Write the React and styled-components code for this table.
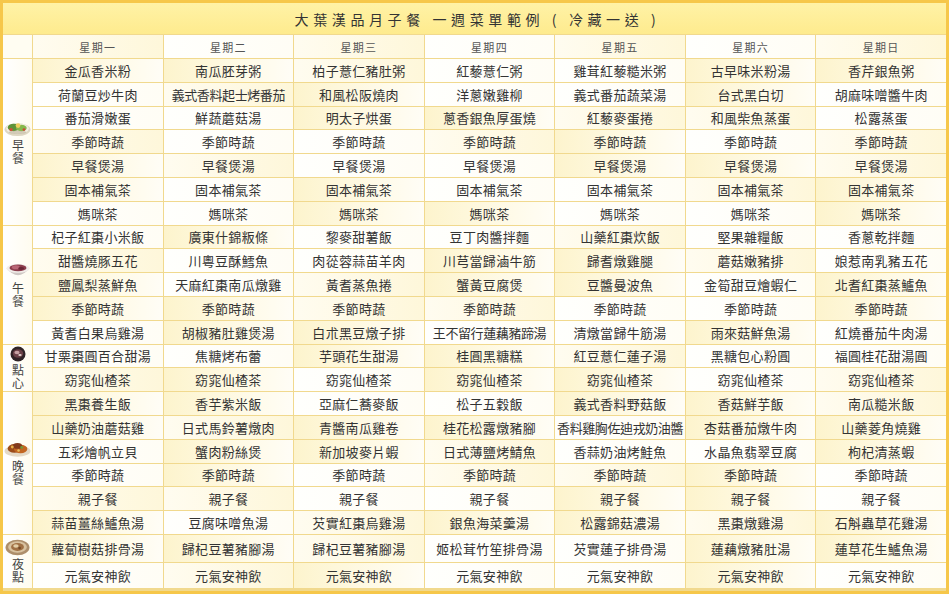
import React from "react";
import styled, { createGlobalStyle } from "styled-components";

const GlobalStyle = createGlobalStyle`
  html, body {
    margin: 0;
    padding: 0;
    background: #ffffff;
  }
  body {
    font-family: "Noto Sans CJK TC", "Noto Sans", sans-serif;
    color: #333;
  }
`;

const DAYS = ["星期一", "星期二", "星期三", "星期四", "星期五", "星期六", "星期日"];

const same = (t) => Array(7).fill(t);

const MEALS = [
  {
    key: "breakfast",
    label: "早餐",
    rows: [
      ["金瓜香米粉", "南瓜胚芽粥", "柏子薏仁豬肚粥", "紅藜薏仁粥", "雞茸紅藜糙米粥", "古早味米粉湯", "香芹銀魚粥"],
      ["荷蘭豆炒牛肉", "義式香料起士烤番茄", "和風松阪燒肉", "洋蔥嫩雞柳", "義式番茄蔬菜湯", "台式黑白切", "胡麻味噌醬牛肉"],
      ["番茄滑嫩蛋", "鮮蔬蘑菇湯", "明太子烘蛋", "蔥香銀魚厚蛋燒", "紅藜麥蛋捲", "和風柴魚蒸蛋", "松露蒸蛋"],
      same("季節時蔬"),
      same("早餐煲湯"),
      same("固本補氣茶"),
      same("媽咪茶"),
    ],
  },
  {
    key: "lunch",
    label: "午餐",
    rows: [
      ["杞子紅棗小米飯", "廣東什錦粄條", "黎麥甜薯飯", "豆丁肉醬拌麵", "山藥紅棗炊飯", "堅果雜糧飯", "香蔥乾拌麵"],
      ["甜醬燒豚五花", "川粵豆酥鱈魚", "肉蓯蓉蒜苗羊肉", "川芎當歸滷牛筋", "歸耆燉雞腿", "蘑菇嫩豬排", "娘惹南乳豬五花"],
      ["鹽鳳梨蒸鮮魚", "天麻紅棗南瓜燉雞", "黃耆蒸魚捲", "蟹黃豆腐煲", "豆醬曼波魚", "金筍甜豆燴蝦仁", "北耆紅棗蒸鱸魚"],
      same("季節時蔬"),
      ["黃耆白果烏雞湯", "胡椒豬肚雞煲湯", "白朮黑豆燉子排", "王不留行蓮藕豬蹄湯", "清燉當歸牛筋湯", "雨來菇鮮魚湯", "紅燒番茄牛肉湯"],
    ],
  },
  {
    key: "snack",
    label: "點心",
    rows: [
      ["甘栗棗圓百合甜湯", "焦糖烤布蕾", "芋頭花生甜湯", "桂圓黑糖糕", "紅豆薏仁蓮子湯", "黑糖包心粉圓", "福圓桂花甜湯圓"],
      same("窈窕仙楂茶"),
    ],
  },
  {
    key: "dinner",
    label: "晚餐",
    rows: [
      ["黑棗養生飯", "香芋紫米飯", "亞麻仁蕎麥飯", "松子五穀飯", "義式香料野菇飯", "香菇鮮芋飯", "南瓜糙米飯"],
      ["山藥奶油蘑菇雞", "日式馬鈴薯燉肉", "青醬南瓜雞卷", "桂花松露燉豬腳", "香料雞胸佐迪戎奶油醬", "杏菇番茄燉牛肉", "山藥菱角燒雞"],
      ["五彩燴帆立貝", "蟹肉粉絲煲", "新加坡麥片蝦", "日式薄鹽烤鯖魚", "香蒜奶油烤鮭魚", "水晶魚翡翠豆腐", "枸杞清蒸蝦"],
      same("季節時蔬"),
      same("親子餐"),
      ["蒜苗薑絲鱸魚湯", "豆腐味噌魚湯", "芡實紅棗烏雞湯", "銀魚海菜羹湯", "松露錦菇濃湯", "黑棗燉雞湯", "石斛蟲草花雞湯"],
    ],
  },
  {
    key: "night",
    label: "夜點",
    rows: [
      ["蘿蔔樹菇排骨湯", "歸杞豆薯豬腳湯", "歸杞豆薯豬腳湯", "姬松茸竹笙排骨湯", "芡實蓮子排骨湯", "蓮藕燉豬肚湯", "蓮草花生鱸魚湯"],
      same("元氣安神飲"),
    ],
  },
];

const TONES = {
  white: "linear-gradient(90deg, #fffffd 0%, #fffdf5 100%)",
  warm: "linear-gradient(90deg, #fdf4cd 0%, #fffbea 70%, #fffdf6 100%)",
  soft: "linear-gradient(90deg, #fffcf0 0%, #fef7da 100%)",
};

const toneFor = (r, c) => {
  const n = (r * 7 + c * 3 + ((r * c) % 4)) % 5;
  if (n === 0 || n === 3) return "warm";
  if (n === 1) return "soft";
  return "white";
};

const Sheet = styled.div`
  width: 949px;
  height: 594px;
  box-sizing: border-box;
  border: 3px solid #f6c74a;
  background: #f1d98e;
  display: grid;
  grid-template-columns: 29px repeat(7, 1fr);
  grid-template-rows: 31px 23px repeat(20, 22.8px) 27px 25px;
  gap: 1px;
  overflow: hidden;
`;

const Title = styled.div`
  grid-column: 1 / -1;
  display: flex;
  align-items: center;
  justify-content: center;
  background: linear-gradient(180deg, #fff2a6 0%, #feeb8e 100%);
  font-size: 14px;
  letter-spacing: 4.6px;
  color: #333;
  white-space: pre;
  padding-left: 6px;
`;

const Corner = styled.div`
  background: #fffdf2;
`;

const DayHead = styled.div`
  display: flex;
  align-items: center;
  justify-content: center;
  background: ${({ $tone }) => TONES[$tone]};
  font-size: 11px;
  letter-spacing: 1.3px;
  color: #555;
`;

const MealLabel = styled.div`
  grid-row: span ${({ $rows }) => $rows};
  display: flex;
  flex-direction: column;
  align-items: center;
  justify-content: center;
  background: linear-gradient(90deg, #ffffff 0%, #fffcef 100%);
`;

const LabelText = styled.span`
  writing-mode: vertical-rl;
  text-orientation: upright;
  font-size: 12px;
  line-height: 14px;
  letter-spacing: 1px;
  color: #444;
`;

const IconWrap = styled.div`
  display: flex;
  flex-shrink: 0;
  margin-bottom: 2px;
`;

const Cell = styled.div`
  display: flex;
  align-items: center;
  justify-content: center;
  background: ${({ $tone }) => TONES[$tone]};
  font-size: 13px;
  letter-spacing: ${({ $long }) => ($long ? "-0.4px" : "0.3px")};
  color: #333;
  white-space: nowrap;
  overflow: hidden;
`;

function MealIcon({ kind }) {
  if (kind === "breakfast") {
    return (
      <svg width="27" height="18" viewBox="0 0 25 16">
        <ellipse cx="12.5" cy="9.5" rx="12" ry="6" fill="#ddd6c2" />
        <ellipse cx="12.5" cy="8.5" rx="10.5" ry="5" fill="#f3efe3" />
        <ellipse cx="9" cy="7.5" rx="5.5" ry="3.4" fill="#5f9338" />
        <ellipse cx="16" cy="8" rx="5" ry="3" fill="#86b84c" />
        <circle cx="13" cy="5.8" r="2.2" fill="#efcf5e" />
        <circle cx="6.5" cy="9.5" r="1.6" fill="#d3503a" />
        <circle cx="18.5" cy="9.5" r="1.3" fill="#c94a35" />
        <ellipse cx="12.5" cy="12" rx="8" ry="1.6" fill="#bdb39b" opacity="0.6" />
      </svg>
    );
  }
  if (kind === "lunch") {
    return (
      <svg width="26" height="18" viewBox="0 0 24 17">
        <path d="M1 6 Q12 19 23 6 Z" fill="#cfc8c4" />
        <ellipse cx="12" cy="6" rx="11" ry="4.2" fill="#f2eeea" />
        <ellipse cx="12" cy="5.6" rx="8" ry="3.2" fill="#8c3d4c" />
        <ellipse cx="10" cy="5" rx="3.8" ry="1.9" fill="#b96676" />
        <ellipse cx="15" cy="6.2" rx="2.8" ry="1.4" fill="#6b2636" />
      </svg>
    );
  }
  if (kind === "snack") {
    return (
      <svg width="18" height="16" viewBox="0 0 18 16">
        <circle cx="9" cy="8" r="7.5" fill="#2f2326" />
        <ellipse cx="9" cy="7.5" rx="5.2" ry="4.2" fill="#6b4148" />
        <ellipse cx="8" cy="6.5" rx="2.6" ry="1.7" fill="#c7a1a4" />
        <ellipse cx="11" cy="9" rx="1.7" ry="1.1" fill="#e6d8d2" />
      </svg>
    );
  }
  if (kind === "dinner") {
    return (
      <svg width="27" height="18" viewBox="0 0 26 16">
        <ellipse cx="13" cy="10" rx="12.5" ry="5.5" fill="#e4d9c6" />
        <ellipse cx="10" cy="7.5" rx="6.5" ry="4.2" fill="#9c4c1a" />
        <ellipse cx="16" cy="8" rx="6.5" ry="4" fill="#c26621" />
        <ellipse cx="13" cy="5" rx="4.5" ry="2.8" fill="#82391a" />
        <circle cx="8" cy="6" r="1.4" fill="#e6b04a" />
        <circle cx="17" cy="6.5" r="1.3" fill="#6d9b3a" />
        <circle cx="14" cy="9.5" r="1.2" fill="#e8c060" />
      </svg>
    );
  }
  return (
    <svg width="25" height="18" viewBox="0 0 24 17">
      <ellipse cx="12" cy="9" rx="11.5" ry="7.5" fill="#ad8e6b" />
      <ellipse cx="12" cy="8.5" rx="9" ry="5.6" fill="#d8c2a0" />
      <ellipse cx="12" cy="8.5" rx="6.2" ry="3.8" fill="#a07044" />
      <ellipse cx="10.5" cy="7.5" rx="2.6" ry="1.6" fill="#e3cfa8" />
      <circle cx="14" cy="9.5" r="1.3" fill="#744a28" />
    </svg>
  );
}

export default function App() {
  let rowIndex = 0;
  return (
    <>
      <GlobalStyle />
      <Sheet>
        <Title>{"大葉漢品月子餐 一週菜單範例 ( 冷藏一送 )"}</Title>
        <Corner />
        {DAYS.map((d, c) => (
          <DayHead key={d} $tone={c % 2 === 0 ? "soft" : "white"}>
            {d}
          </DayHead>
        ))}
        {MEALS.map((meal) => (
          <React.Fragment key={meal.key}>
            <MealLabel $rows={meal.rows.length}>
              <IconWrap>
                <MealIcon kind={meal.key} />
              </IconWrap>
              <LabelText>{meal.label}</LabelText>
            </MealLabel>
            {meal.rows.map((row) => {
              const r = rowIndex++;
              return row.map((text, c) => (
                <Cell
                  key={`${r}-${c}`}
                  $tone={toneFor(r, c)}
                  $long={text.length >= 9}
                >
                  {text}
                </Cell>
              ));
            })}
          </React.Fragment>
        ))}
      </Sheet>
    </>
  );
}
